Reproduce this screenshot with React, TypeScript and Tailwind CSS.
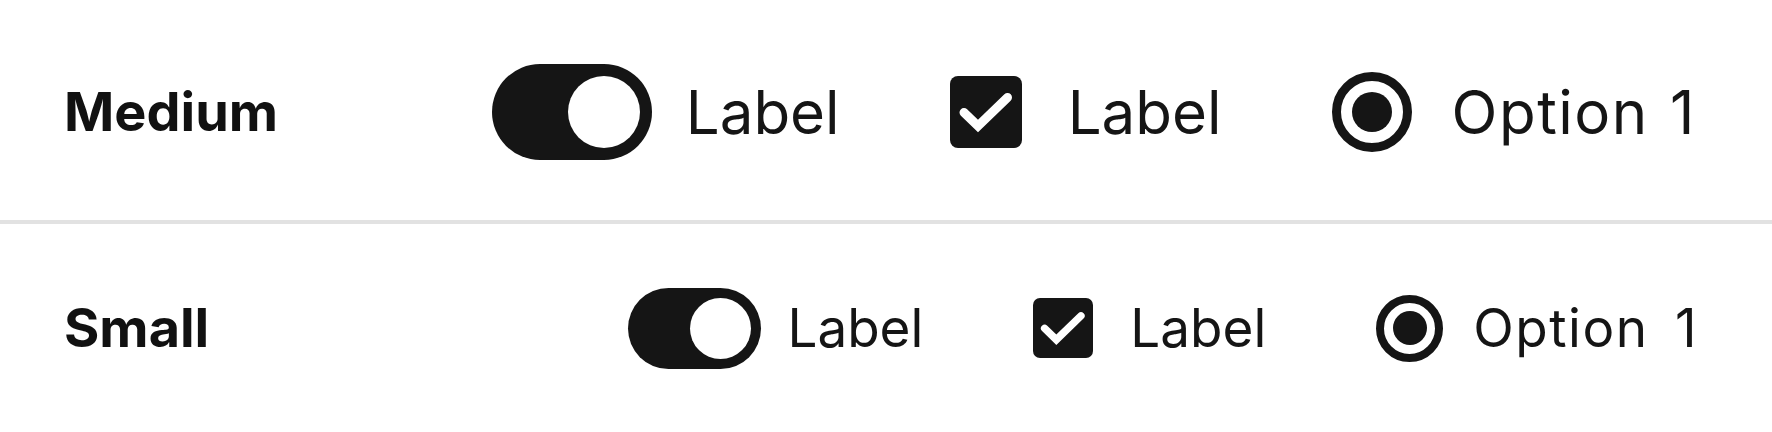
import React from "react";

// ─── Controls ────────────────────────────────────────────────────────────────

type Size = "md" | "sm";

const Toggle = ({ size }: { size: Size }) => {
  const track =
    size === "md" ? "h-[96px] w-[160px] p-[12px]" : "h-[81px] w-[133px] p-[10px]";
  const knob = size === "md" ? "h-[72px] w-[72px]" : "h-[61px] w-[61px]";
  return (
    <div className={`flex shrink-0 items-center justify-end rounded-full bg-[#151515] ${track}`}>
      <div className={`rounded-full bg-white ${knob}`} />
    </div>
  );
};

const Checkbox = ({ size }: { size: Size }) => {
  const px = size === "md" ? 72 : 60;
  const box = size === "md" ? "h-[72px] w-[72px] rounded-[8px]" : "h-[60px] w-[60px] rounded-[7px]";
  return (
    <div className={`flex shrink-0 items-center justify-center bg-[#151515] ${box}`}>
      <svg viewBox="0 0 72 72" width={px} height={px} className="shrink-0" fill="none">
        <path
          d="M14 36.5 L28 50 L57.5 21.5"
          stroke="#ffffff"
          strokeWidth="9"
          strokeLinecap="round"
          strokeLinejoin="miter"
        />
      </svg>
    </div>
  );
};

const Radio = ({ size }: { size: Size }) => {
  const ring =
    size === "md" ? "h-[80px] w-[80px] border-[9px]" : "h-[67px] w-[67px] border-[8px]";
  const dot = size === "md" ? "h-[40px] w-[40px]" : "h-[34px] w-[34px]";
  return (
    <div className={`flex shrink-0 items-center justify-center rounded-full border-[#151515] ${ring}`}>
      <div className={`rounded-full bg-[#151515] ${dot}`} />
    </div>
  );
};

// ─── Row ─────────────────────────────────────────────────────────────────────

const Row = ({ title, size }: { title: string; size: Size }) => {
  const md = size === "md";
  const text = md ? "text-[60px]" : "text-[53px]";
  return (
    <div
      className={`flex items-center justify-between pl-[64px] ${
        md ? "h-[220px] pt-[4px] pr-[76px]" : "h-[208px] pr-[74px]"
      }`}
    >
      <span className="text-[54px] font-bold leading-none text-[#111111]">{title}</span>
      <div className="flex items-center gap-[110px]">
        <div className={`flex items-center ${md ? "gap-[34px]" : "gap-[26px]"}`}>
          <Toggle size={size} />
          <span className={`leading-none text-[#151515] ${text}`}>Label</span>
        </div>
        <div className={`flex items-center ${md ? "gap-[46px]" : "gap-[37px]"}`}>
          <Checkbox size={size} />
          <span className={`leading-none text-[#151515] ${text}`}>Label</span>
        </div>
        <div className={`flex items-center ${md ? "gap-[40px]" : "gap-[30px]"}`}>
          <Radio size={size} />
          <span
            className={`leading-none tracking-[1.5px] text-[#151515] ${text} ${
              md ? "[word-spacing:3px]" : "[word-spacing:10px]"
            }`}
          >
            Option 1
          </span>
        </div>
      </div>
    </div>
  );
};

// ─── Page ────────────────────────────────────────────────────────────────────

export default function App() {
  return (
    <div className="h-[432px] w-full overflow-hidden bg-white font-[Inter,sans-serif]">
      <Row title="Medium" size="md" />
      <div className="h-[4px] w-full bg-[#e2e2e2]" />
      <Row title="Small" size="sm" />
    </div>
  );
}
